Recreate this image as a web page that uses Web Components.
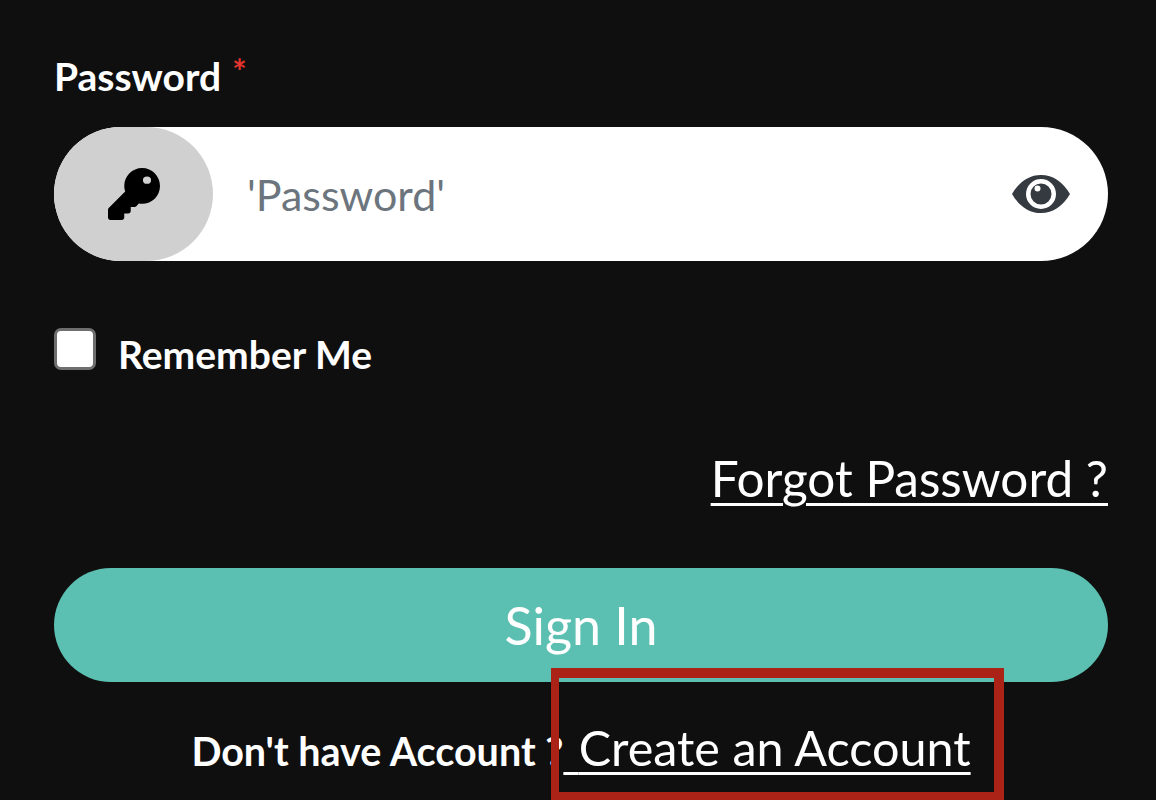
<!DOCTYPE html>
<html><head><meta charset="utf-8">
<style>
html,body{margin:0;padding:0;background:#0f0f0f;height:800px;overflow:hidden}
body{font-family:"Lato","Liberation Sans",sans-serif;color:#fff}
</style></head><body>
<login-form>
  <pass-field label="Password" placeholder="'Password'"></pass-field>
  <remember-check>Remember Me</remember-check>
  <forgot-link>Forgot Password ?</forgot-link>
  <sign-button>Sign In</sign-button>
  <account-line></account-line>
</login-form>
<script>
function def(name, html){
  customElements.define(name, class extends HTMLElement{
    constructor(){super();const r=this.attachShadow({mode:"open"});
      r.innerHTML=typeof html==="function"?html(this):html;}
  });
}
def("login-form",`<style>:host{display:flex;flex-direction:column;box-sizing:border-box;width:1156px;height:800px;padding:54px 48px 0 54px;position:relative}</style><slot></slot>`);
def("pass-field",(h)=>`<style>
:host{display:block}
.lab{display:flex;align-items:flex-start;gap:11px;font-weight:700;font-size:39px;line-height:45px;height:46px}
.req{color:#e3342f;font-size:34px;line-height:34px}
.box{margin-top:27px;height:134px;border-radius:67px;background:#fff;display:flex;align-items:center;color:#6c757d}
.ic{width:159px;height:134px;border-radius:67px;background:#d0d0d0;display:flex;align-items:center;justify-content:center;flex:none}
.ph{margin-left:34px;flex:1;font-size:43px}
.eye{margin-right:38px;display:block}
</style>
<div class="lab"><span>Password</span><span class="req">*</span></div>
<div class="box">
<div class="ic"><svg width="52" height="52" viewBox="0 0 512 512"><path fill="#000" fill-rule="evenodd" d="M512 176C512 273 433 352 336 352c-11 0-22-1-33-3l-24 27a24 24 0 0 1-18 8H224v40c0 13-11 24-24 24h-40v40c0 13-11 24-24 24H24c-13 0-24-11-24-24v-78c0-6 3-12 7-17l162-162C163 214 160 195 160 176 160 79 239 0 336 0 433 0 512 79 512 176zM384 84a40 36 0 1 0 0 72 40 36 0 0 0 0-72z"/></svg></div>
<div class="ph">${h.getAttribute("placeholder")}</div>
<svg class="eye" width="58" height="38" viewBox="0 0 58 38"><path fill="#343a40" fill-rule="evenodd" d="M0 19C7 7 17 0 29 0s22 7 29 19c-7 12-17 19-29 19S7 31 0 19zM29 4a15 15 0 1 0 0 30 15 15 0 0 0 0-30z"/><path fill="#343a40" fill-rule="evenodd" d="M29 8.500a10.500 10.500 0 1 1 0 21 10.500 10.500 0 0 1 0-21zM25.500 10.500a3 3 0 1 0 0 6 3 3 0 0 0 0-6z"/></svg>
</div>`);
def("remember-check",`<style>
:host{display:flex;align-items:center;gap:22px;margin-top:67px;height:42px;font-weight:700;font-size:39px;line-height:42px}
.c{width:36px;height:36px;background:#fff;border:3px solid #6f6f6f;border-radius:7px;flex:none}
span{position:relative;top:5px}
</style><div class="c"></div><span><slot></slot></span>`);
def("forgot-link",`<style>
:host{display:block;text-align:right;margin-top:80px;font-size:49.500px;line-height:56px;height:56px}
a{color:#fff;text-decoration:underline;text-decoration-thickness:2.500px;text-underline-offset:6px}
</style><a><slot></slot></a>`);
def("sign-button",`<style>
:host{display:flex;align-items:center;justify-content:center;margin-top:62px;height:114px;border-radius:57px;background:#5bc0b1;font-size:52px}
</style><slot></slot>`);
def("account-line",`<style>
:host{display:flex;justify-content:center;align-items:baseline;margin-top:35px;height:60px;line-height:60px;white-space:pre}
.b{font-weight:700;font-size:39.500px}
a{color:#fff;font-size:48.500px;text-decoration:underline;text-decoration-thickness:2.500px;text-underline-offset:6px}
.sp{letter-spacing:3px}
.mark{position:absolute;left:551px;top:668px;width:453px;height:132px;box-sizing:border-box;border:solid #ab2316;border-width:10px 10px 8px 8px}
</style><span class="b">Don't have Account ?</span><a><span class="sp"> </span>Create an Account</a><div class="mark"></div>`);
</script>
</body></html>
